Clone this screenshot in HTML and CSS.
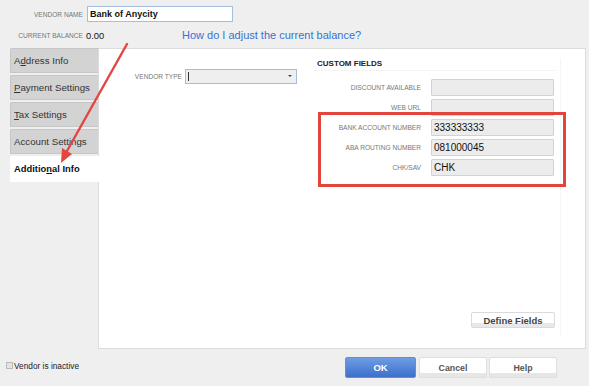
FILE: index.html
```html
<!DOCTYPE html>
<html lang="en">
<head>
    <meta charset="UTF-8">
    <title>Edit Vendor - Additional Info</title>
    <link rel="stylesheet" href="styles.css">
</head>
<body>
    <div class="dialog">
        <div class="header">
            <div class="header-row">
                <span class="cap head-label">VENDOR NAME</span>
                <div class="name-box">Bank of Anycity</div>
            </div>
            <div class="header-row balance-row">
                <span class="cap head-label">CURRENT BALANCE</span>
                <span class="balance">0.00</span>
                <a class="help-link" href="#">How do I adjust the current balance?</a>
            </div>
        </div>

        <div class="main">
            <ul class="tabs">
                <li class="tab">A<u>d</u>dress Info</li>
                <li class="tab"><u>P</u>ayment Settings</li>
                <li class="tab"><u>T</u>ax Settings</li>
                <li class="tab">Account Settings</li>
                <li class="tab active">Additio<u>n</u>al Info</li>
            </ul>

            <div class="panel">
                <div class="vendor-type">
                    <span class="cap">VENDOR TYPE</span>
                    <div class="select">
                        <span class="cursor"></span>
                        <span class="caret"></span>
                    </div>
                </div>

                <div class="custom">
                    <div class="custom-title">CUSTOM FIELDS</div>
                    <div class="field"><span class="cap">DISCOUNT AVAILABLE</span><div class="field-box"></div></div>
                    <div class="field"><span class="cap">WEB URL</span><div class="field-box"></div></div>
                    <div class="field"><span class="cap">BANK ACCOUNT NUMBER</span><div class="field-box">333333333</div></div>
                    <div class="field"><span class="cap">ABA ROUTING NUMBER</span><div class="field-box">081000045</div></div>
                    <div class="field"><span class="cap">CHK/SAV</span><div class="field-box">CHK</div></div>
                    <button class="define-btn">Define Fields</button>
                </div>
            </div>
        </div>

        <div class="footer">
            <label class="inactive"><span class="check"></span>Vendor is inactive</label>
            <div class="actions">
                <button class="btn primary">OK</button>
                <button class="btn">Cancel</button>
                <button class="btn">Help</button>
            </div>
        </div>

        <!-- annotation overlay -->
        <div class="highlight"></div>
        <svg class="arrow" width="589" height="386" viewBox="0 0 589 386">
            <line x1="127" y1="44" x2="67" y2="151" stroke="#e2473f" stroke-width="2.4" stroke-linecap="round"/>
            <polygon points="61,163 72,154 62,148" fill="#e2473f"/>
        </svg>
    </div>
</body>
</html>
```

FILE: styles.css
```css
/* General */
body {
    margin: 0;
    font-family: 'Liberation Sans', Arial, sans-serif;
    background: #efefef;
    color: #222;
}

.dialog {
    position: relative;
    width: 589px;
    height: 386px;
    overflow: hidden;
}

.cap {
    font-size: 6.6px;
    color: #777;
    text-transform: uppercase;
    white-space: nowrap;
}

/* Header */
.header {
    height: 48px;
    box-sizing: border-box;
    padding-top: 6px;
}

.header-row {
    display: flex;
    align-items: center;
    height: 16px;
}

.head-label {
    width: 83px;
    text-align: right;
    margin-right: 4px;
}

.name-box {
    width: 146px;
    height: 16px;
    box-sizing: border-box;
    border: 1px solid #a7bde0;
    background: #fff;
    font-size: 9px;
    font-weight: bold;
    line-height: 14px;
    padding-left: 2px;
    color: #111;
}

.balance-row {
    margin-top: 5px;
}

.balance {
    font-size: 9.4px;
    color: #111;
    width: 96px;
    margin-left: -1px;
}

.help-link {
    font-size: 11px;
    color: #3b6fd1;
    text-decoration: none;
}

/* Tabs + panel */
.main {
    display: flex;
    height: 301px;
    padding-left: 10px;
    padding-right: 3px;
}

.tabs {
    list-style: none;
    margin: 0;
    padding: 0;
    width: 88px;
    display: flex;
    flex-direction: column;
    gap: 2px;
    position: relative;
    z-index: 1;
}

.tab {
    height: 25px;
    box-sizing: border-box;
    background: #d3d3d3;
    border: 1px solid #c6c6c6;
    border-right: none;
    border-radius: 2px 0 0 0;
    font-size: 9.7px;
    color: #333;
    line-height: 23px;
    padding-left: 3px;
    white-space: nowrap;
}

.tab u {
    text-decoration-thickness: 1px;
}

.tab.active {
    background: #fff;
    border-color: #fff;
    font-weight: bold;
    color: #111;
    font-size: 9.4px;
    margin-right: -1px;
    height: 26px;
}

.panel {
    flex: 1;
    display: flex;
    background: #fff;
    border: 1px solid #dcdcdc;
    padding-top: 9px;
}

.vendor-type {
    width: 215px;
    display: flex;
    align-items: center;
    justify-content: flex-end;
    align-self: flex-start;
    margin-top: 11px;
    gap: 3px;
    padding-right: 1px;
    box-sizing: border-box;
}

.select {
    position: relative;
    width: 112px;
    height: 15px;
    box-sizing: border-box;
    border: 1px solid #a7bde0;
    background: #efefef;
    margin-right: 16px;
}

.cursor {
    position: absolute;
    left: 2px;
    top: 2px;
    width: 1px;
    height: 9px;
    background: #333;
}

.caret {
    position: absolute;
    right: 4px;
    top: 5px;
    border-left: 2px solid transparent;
    border-right: 2px solid transparent;
    border-top: 2px solid #444;
}

/* Custom fields */
.custom {
    width: 247px;
    height: 278px;
    box-sizing: border-box;
    display: flex;
    flex-direction: column;
    border-right: 1px solid #f5f5f5;
    padding-right: 5px;
}

.custom-title {
    font-size: 8px;
    font-weight: bold;
    color: #222;
    padding-left: 3px;
    height: 12px;
    line-height: 12px;
    border-bottom: 1px solid #f3f3f3;
    margin-bottom: 8px;
}

.field {
    display: flex;
    align-items: center;
    height: 17px;
    margin-bottom: 3px;
}

.field .cap {
    width: 107px;
    text-align: right;
    margin-right: 10px;
}

.field-box {
    width: 123px;
    height: 17px;
    box-sizing: border-box;
    background: #ececec;
    border: 1px solid #d2d2d2;
    border-radius: 1px;
    font-size: 10px;
    line-height: 15px;
    padding-left: 2px;
    color: #111;
}

.define-btn {
    margin-top: auto;
    margin-bottom: 8px;
    align-self: flex-end;
    width: 84px;
    height: 16px;
    padding: 0;
    border: 1px solid #dadada;
    border-radius: 2px;
    background: linear-gradient(#fff 70%, #e8e8e8 70%);
    font-family: inherit;
    font-size: 9.5px;
    font-weight: bold;
    color: #444;
}

/* Footer */
.footer {
    height: 37px;
    display: flex;
    justify-content: space-between;
    padding: 0 32px 0 6px;
}

.inactive {
    display: flex;
    align-items: center;
    font-size: 8.3px;
    color: #222;
    height: 33px;
}

.check {
    width: 5px;
    height: 5px;
    border: 1px solid #bbb;
    background: #e4e4e4;
    margin-right: 1px;
}

.actions {
    display: flex;
    gap: 2px;
    padding-top: 8px;
}

.btn {
    width: 68px;
    height: 21px;
    padding: 0;
    border: 1px solid #dedede;
    border-radius: 2px;
    background: linear-gradient(#fff 80%, #e6e6e6 80%);
    font-family: inherit;
    font-size: 8.8px;
    font-weight: bold;
    color: #555;
}

.btn.primary {
    width: 71px;
    margin-right: 1px;
    border-color: #5f8fd6;
    background: linear-gradient(#6e9de2, #3d6fcc);
    color: #fff;
    font-size: 9.5px;
}

/* Annotation overlay */
.highlight {
    position: absolute;
    z-index: 2;
    left: 318px;
    top: 112px;
    width: 248px;
    height: 75px;
    box-sizing: border-box;
    border: 3px solid #e2453c;
}

.arrow {
    position: absolute;
    z-index: 2;
    left: 0;
    top: 0;
    pointer-events: none;
}
```
